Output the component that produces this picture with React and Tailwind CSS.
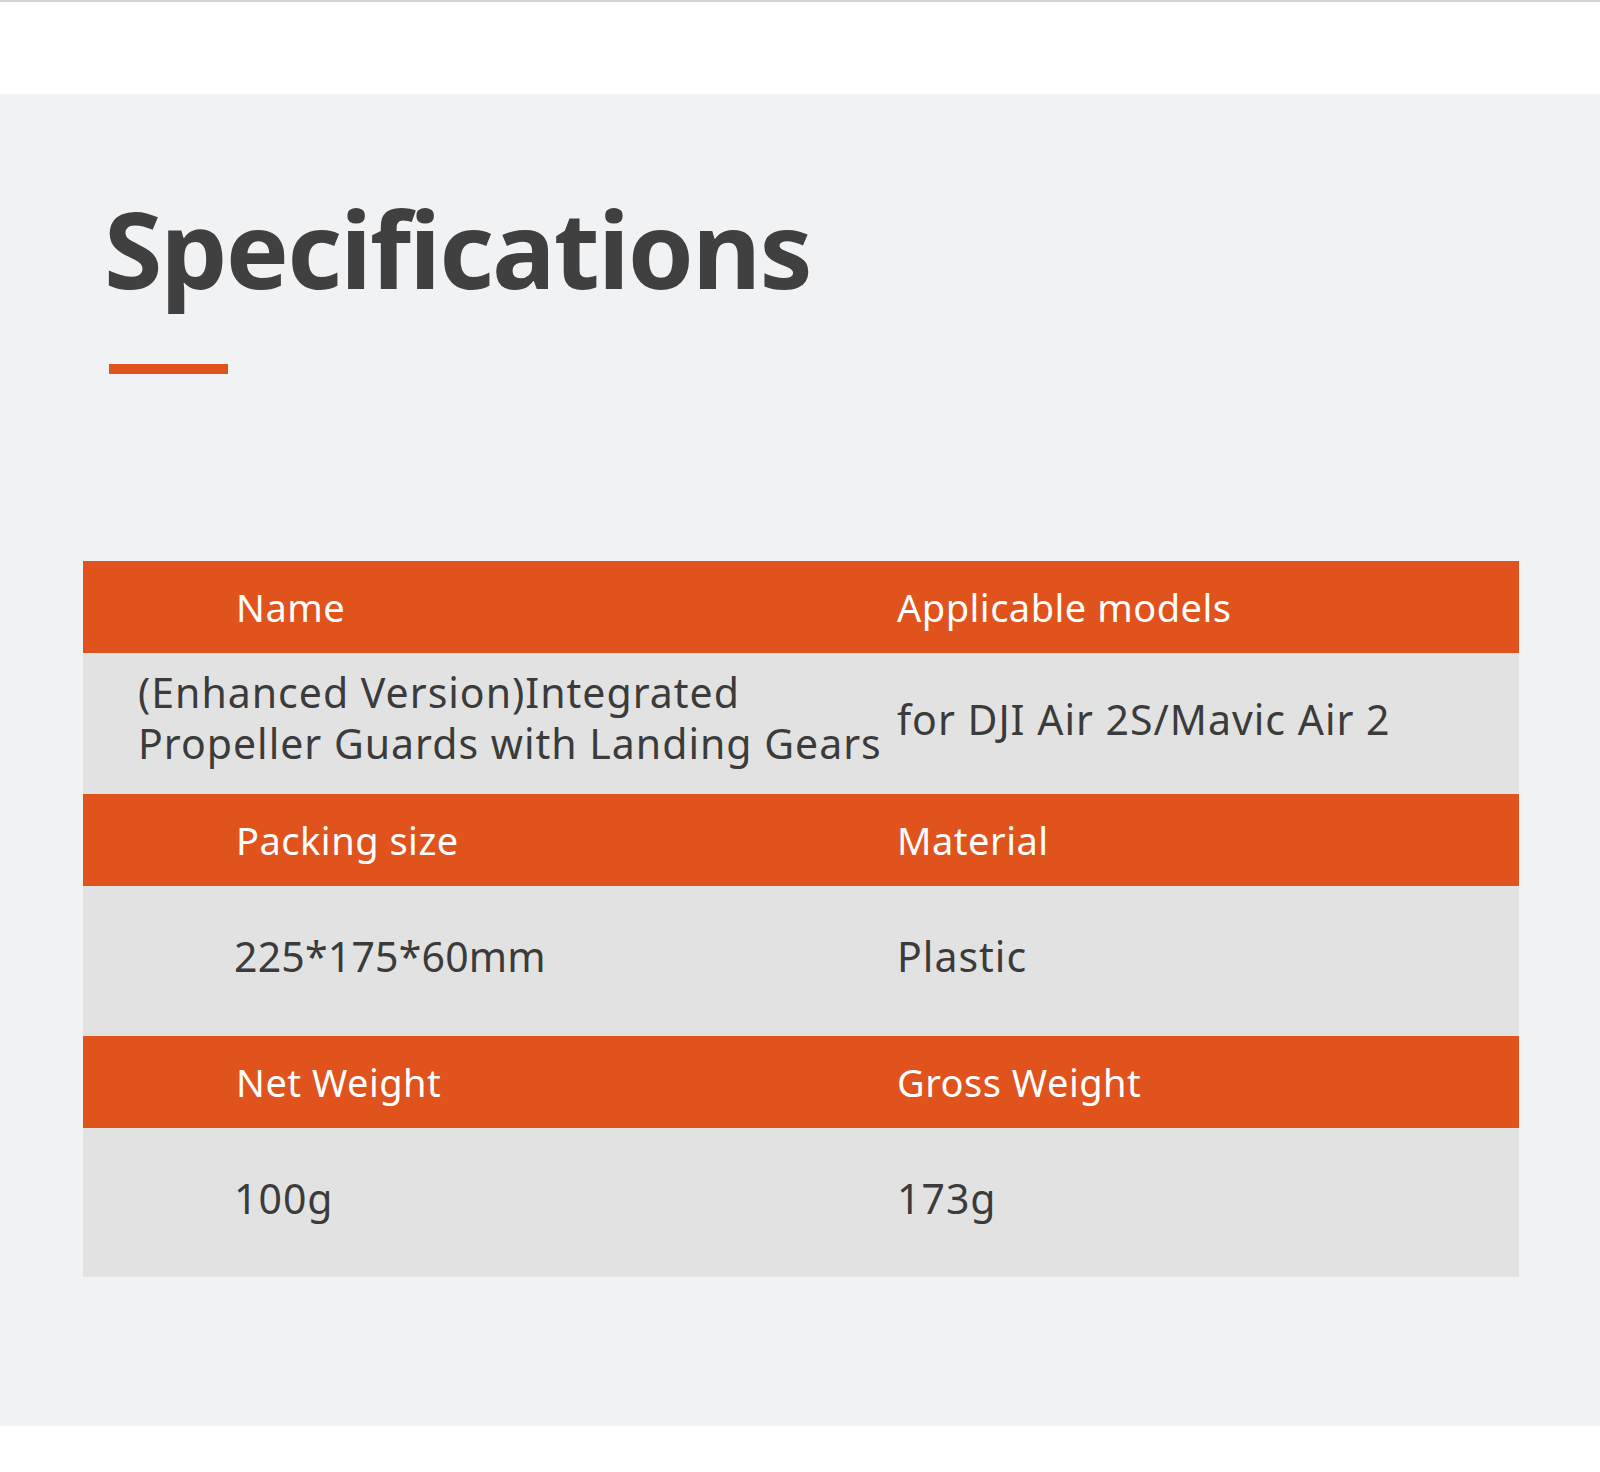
const rows = [
  {
    head: ["Name", "Applicable models"],
    value: [
      <>
        (Enhanced Version)Integrated
        <br />
        Propeller Guards with Landing Gears
      </>,
      "for DJI Air 2S/Mavic Air 2",
    ],
    valueHeight: "h-[141px]",
    wide: true,
  },
  {
    head: ["Packing size", "Material"],
    value: [<span className="tracking-[0.2px]">225*175*60mm</span>, "Plastic"],
    valueHeight: "h-[150px]",
  },
  {
    head: ["Net Weight", "Gross Weight"],
    value: ["100g", "173g"],
    valueHeight: "h-[149px]",
  },
];

function HeadRow({ cells }) {
  return (
    <div className="grid h-[92px] grid-cols-[814px_1fr] items-center bg-[#e0531d] text-[38px] tracking-[0.5px] text-white">
      <div className="pl-[153px]">{cells[0]}</div>
      <div>{cells[1]}</div>
    </div>
  );
}

function ValueRow({ cells, height, wide }) {
  return (
    <div
      className={`grid ${height} grid-cols-[814px_1fr] items-center bg-[#e2e2e2] pb-[8px] text-[41px] tracking-[1px] text-[#3b3b3b]`}
    >
      <div className={wide ? "pl-[55px] pb-[4px] leading-[51px]" : "pl-[151px]"}>{cells[0]}</div>
      <div>{cells[1]}</div>
    </div>
  );
}

export default function App() {
  return (
    <div className="min-h-[1472px] bg-white font-['Noto_Sans',sans-serif]">
      <div className="h-[94px] border-t-2 border-[#d4d4d4]" />

      <section className="bg-[#f1f2f4] pb-[149px]">
        <div className="pl-[104px] pt-[100px]">
          <h1 className="text-[106px] font-bold leading-[108px] tracking-[-1.8px] text-[#404040]">
            Specifications
          </h1>
          <div className="ml-[5px] mt-[62px] h-[10px] w-[119px] bg-[#e0531d]" />
        </div>

        <div className="mx-[83px] mt-[187px] w-[1436px]">
          {rows.map((r) => (
            <div key={r.head[0]}>
              <HeadRow cells={r.head} />
              <ValueRow cells={r.value} height={r.valueHeight} wide={r.wide} />
            </div>
          ))}
        </div>
      </section>
    </div>
  );
}
